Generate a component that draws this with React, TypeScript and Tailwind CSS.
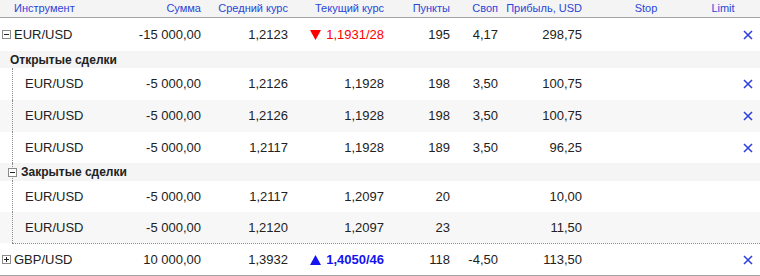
import type { ReactNode } from 'react';

const cols = 'grid grid-cols-[130px_71px_87px_96px_66px_48px_84px_128px_26px_24px] items-center';

function Box({ plus = false, className = '' }: { plus?: boolean; className?: string }) {
  return (
    <svg width="9" height="9" viewBox="0 0 9 9" className={`shrink-0 ${className}`}>
      <rect x="0.5" y="0.5" width="8" height="8" fill="#fff" stroke="#8a8a8a" />
      <line x1="2" y1="4.5" x2="7" y2="4.5" stroke="#222" />
      {plus && <line x1="4.5" y1="2" x2="4.5" y2="7" stroke="#222" />}
    </svg>
  );
}

function Close() {
  return (
    <svg width="10" height="10" viewBox="0 0 10 10" className="mx-auto">
      <path d="M1 1L9 9M9 1L1 9" stroke="#2f42dc" strokeWidth="1.6" />
    </svg>
  );
}

type Row = {
  sum: string;
  avg: string;
  cur: ReactNode;
  pts: string;
  swap: string;
  profit: string;
  close?: boolean;
};

function Cells({ r }: { r: Row }) {
  return (
    <>
      <div className="text-right">{r.sum}</div>
      <div className="text-right">{r.avg}</div>
      <div className="text-right">{r.cur}</div>
      <div className="text-right">{r.pts}</div>
      <div className="text-right">{r.swap}</div>
      <div className="text-right">{r.profit}</div>
      <div />
      <div />
      <div className="flex">{r.close && <Close />}</div>
    </>
  );
}

function SubRow({ r, h, alt }: { r: Row; h: string; alt?: boolean }) {
  return (
    <div className={`${cols} ${h} ${alt ? 'bg-[#f7f7f7]' : 'bg-white'}`}>
      <div className="h-full pl-[12px]">
        <div className="h-full border-l border-dotted border-[#8c8c8c] pl-[12px] flex items-center">EUR/USD</div>
      </div>
      <Cells r={r} />
    </div>
  );
}

function Arrow({ up }: { up?: boolean }) {
  return (
    <svg width="11" height="10" viewBox="0 0 11 10" className="inline-block align-[-1px] mr-[5px]">
      <path d={up ? 'M5.5 0L11 10H0Z' : 'M0 0H11L5.5 10Z'} fill="currentColor" />
    </svg>
  );
}

const open: Row[] = [
  { sum: '-5 000,00', avg: '1,2126', cur: '1,1928', pts: '198', swap: '3,50', profit: '100,75', close: true },
  { sum: '-5 000,00', avg: '1,2126', cur: '1,1928', pts: '198', swap: '3,50', profit: '100,75', close: true },
  { sum: '-5 000,00', avg: '1,2117', cur: '1,1928', pts: '189', swap: '3,50', profit: '96,25', close: true },
];

const closed: Row[] = [
  { sum: '-5 000,00', avg: '1,2117', cur: '1,2097', pts: '20', swap: '', profit: '10,00' },
  { sum: '-5 000,00', avg: '1,2120', cur: '1,2097', pts: '23', swap: '', profit: '11,50' },
];

export default function App() {
  return (
    <div className="w-[760px] h-[276px] bg-white text-[13px] text-[#222] font-['Liberation_Sans',Arial,sans-serif] overflow-hidden">
      {/* Header */}
      <div className={`${cols} h-[18px] bg-[#f4f4f4] border-b border-[#a5a5a5] text-[11px] text-[#2a46d8]`}>
        <div className="pl-[14px]">Инструмент</div>
        <div className="text-right">Сумма</div>
        <div className="text-right">Средний курс</div>
        <div className="text-right">Текущий курс</div>
        <div className="text-right">Пункты</div>
        <div className="text-right">Своп</div>
        <div className="text-right">Прибыль, USD</div>
        <div className="text-center">Stop</div>
        <div className="text-center">Limit</div>
        <div />
      </div>

      {/* EUR/USD group */}
      <div className={`${cols} h-[33px] bg-white`}>
        <div className="flex items-center pl-[2px] gap-[3px]">
          <Box />
          <span>EUR/USD</span>
        </div>
        <Cells
          r={{
            sum: '-15 000,00',
            avg: '1,2123',
            cur: <span className="text-[#ff0000]"><Arrow />1,1931/28</span>,
            pts: '195',
            swap: '4,17',
            profit: '298,75',
            close: true,
          }}
        />
      </div>

      <div className="h-[17px] bg-[#f5f5f5] flex items-center pl-[10px] text-[12px] font-bold">Открытые сделки</div>
      <SubRow r={open[0]} h="h-[32px]" />
      <SubRow r={open[1]} h="h-[32px]" alt />
      <SubRow r={open[2]} h="h-[31px]" />

      <div className="h-[18px] bg-[#f5f5f5] pl-[12px]">
        <div className="h-full border-l border-dotted border-[#8c8c8c] flex items-center text-[12px] font-bold">
          <Box className="-ml-[5px]" />
          <span className="ml-[4px]">Закрытые сделки</span>
        </div>
      </div>
      <SubRow r={closed[0]} h="h-[31px]" />
      <SubRow r={closed[1]} h="h-[31px]" alt />
      <div className="ml-[12px] border-t border-dotted border-[#8c8c8c]" />

      {/* GBP/USD */}
      <div className={`${cols} h-[31px] bg-white border-b border-[#a5a5a5] box-content`}>
        <div className="flex items-center pl-[2px] gap-[3px]">
          <Box plus />
          <span>GBP/USD</span>
        </div>
        <Cells
          r={{
            sum: '10 000,00',
            avg: '1,3932',
            cur: <span className="text-[#1414f0] font-bold"><Arrow up />1,4050/46</span>,
            pts: '118',
            swap: '-4,50',
            profit: '113,50',
            close: true,
          }}
        />
      </div>
    </div>
  );
}
